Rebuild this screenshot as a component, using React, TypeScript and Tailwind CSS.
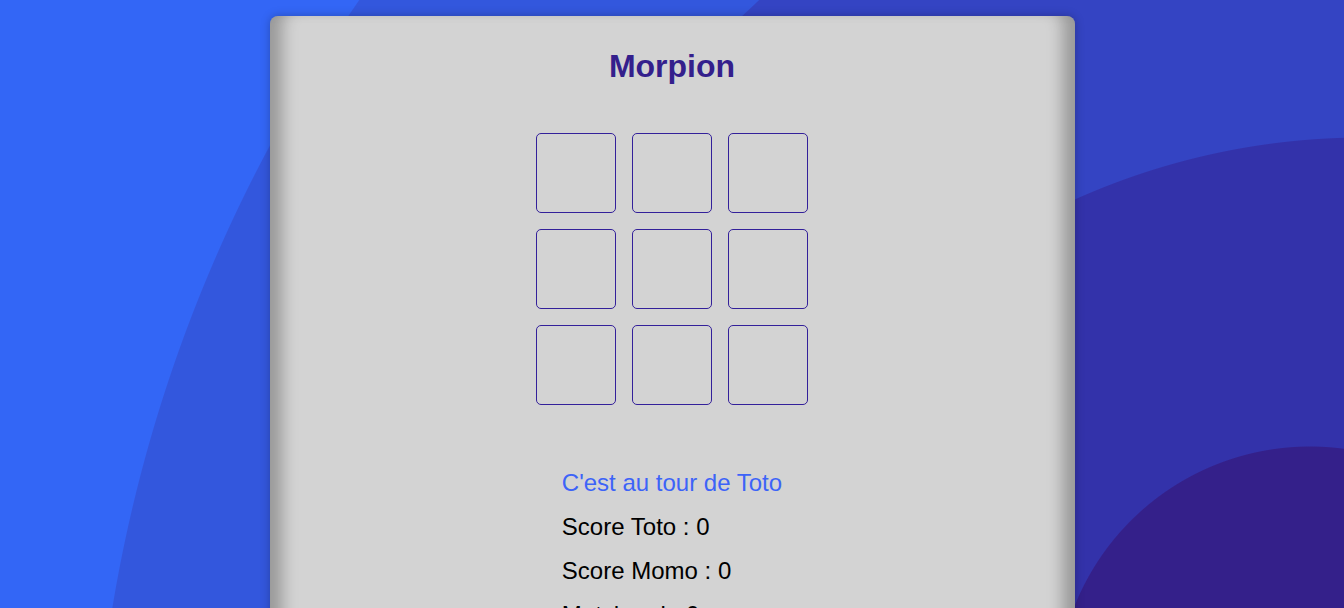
const cells = Array.from({ length: 9 }, (_, i) => i);

function Board() {
  return (
    <div className="mx-auto mt-12 grid w-fit grid-cols-[repeat(3,80px)] gap-4">
      {cells.map((i) => (
        <button
          key={i}
          type="button"
          className="h-20 w-20 rounded-[5px] border border-[#33209a] bg-transparent"
        />
      ))}
    </div>
  );
}

export default function App() {
  return (
    <div
      className="min-h-screen bg-[#3366f6] bg-[radial-gradient(circle_at_1310px_700px,#34208a_253px,transparent_254px),radial-gradient(circle_at_1364px_843px,#3332aa_705px,transparent_706px),radial-gradient(circle_at_1500px_803px,#3444c3_1092px,transparent_1093px),radial-gradient(circle_at_1580px_850px,#3357dd_1487px,transparent_1488px)] pt-4 font-['Liberation_Sans',Arial,sans-serif]"
    >
      <main className="mx-auto w-[805px] rounded-t-lg bg-[#d3d3d3] pt-8 pb-10 shadow-[0_0_10px_rgba(0,0,0,0.25),inset_22px_0_16px_-10px_rgba(0,0,0,0.28),inset_-22px_0_16px_-10px_rgba(0,0,0,0.28)]">
        <h1 className="text-center text-[32px] leading-[37px] font-bold text-[#341f8c]">
          Morpion
        </h1>

        <Board />

        <div className="mx-auto mt-16 flex w-fit flex-col gap-4 text-2xl leading-[28px] text-black">
          <p className="text-[#3d63f8]">C'est au tour de Toto</p>
          <p>Score Toto : 0</p>
          <p>Score Momo : 0</p>
          <p>Match nul : 0</p>
        </div>
      </main>
    </div>
  );
}
